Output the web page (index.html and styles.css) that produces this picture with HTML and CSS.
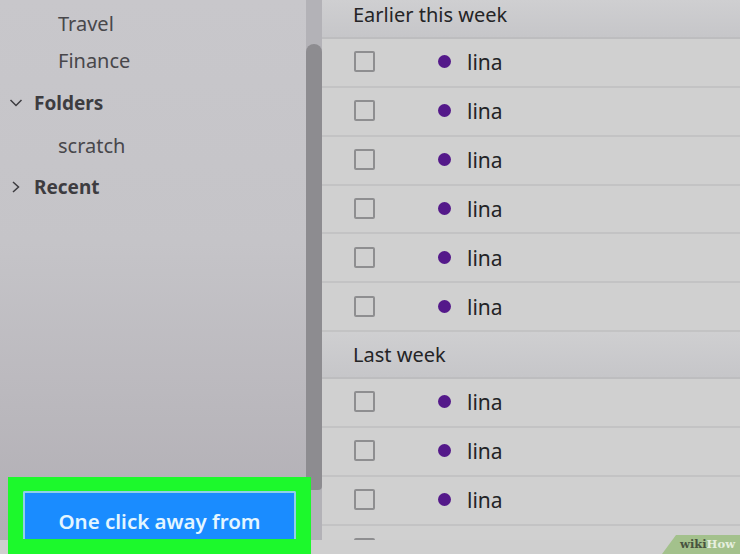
FILE: index.html
```html
<!DOCTYPE html>
<html lang="en">
<head>
<meta charset="utf-8">
<title>Mail</title>
<link rel="stylesheet" href="styles.css">
</head>
<body>
<div class="app">
  <div class="left">
    <aside class="sidebar">
      <nav class="nav">
        <div class="item sub first">Travel</div>
        <div class="item sub second">Finance</div>
        <div class="item head">
          <svg class="chev" width="14" height="10" viewBox="0 0 14 10"><path d="M1.5 2 L7 7.5 L12.5 2" fill="none" stroke="#3d3c40" stroke-width="1.5"/></svg>
          <span>Folders</span>
        </div>
        <div class="item sub">scratch</div>
        <div class="item head">
          <svg class="chev" width="14" height="12" viewBox="0 0 14 12"><path d="M4 1 L9.5 6 L4 11" fill="none" stroke="#3d3c40" stroke-width="1.5"/></svg>
          <span>Recent</span>
        </div>
      </nav>
      <div class="scrollbar"><div class="thumb"></div></div>
    </aside>
  </div>
  <main class="list">
    <div class="group first-group">Earlier this week</div>
    <div class="row"><span class="check"></span><span class="dot"></span><span class="name">lina</span></div>
    <div class="row"><span class="check"></span><span class="dot"></span><span class="name">lina</span></div>
    <div class="row"><span class="check"></span><span class="dot"></span><span class="name">lina</span></div>
    <div class="row"><span class="check"></span><span class="dot"></span><span class="name">lina</span></div>
    <div class="row"><span class="check"></span><span class="dot"></span><span class="name">lina</span></div>
    <div class="row"><span class="check"></span><span class="dot"></span><span class="name">lina</span></div>
    <div class="group">Last week</div>
    <div class="row"><span class="check"></span><span class="dot"></span><span class="name">lina</span></div>
    <div class="row"><span class="check"></span><span class="dot"></span><span class="name">lina</span></div>
    <div class="row"><span class="check"></span><span class="dot"></span><span class="name">lina</span></div>
    <div class="row"><span class="check"></span></div>
  </main>
</div>
<div class="strip"></div>
<div class="callout"><button class="cta" type="button">One click away from</button></div>
<div class="badge"><span class="wiki">wiki</span><span class="how">How</span></div>
</body>
</html>
```
FILE: styles.css
```css
html, body {
  margin: 0;
  padding: 0;
  width: 740px;
  height: 554px;
  overflow: hidden;
  font-family: "Noto Sans", "Open Sans", sans-serif;
}
.app {
  display: flex;
  height: 540px;
  overflow: hidden;
}
.strip {
  height: 14px;
  background: #cfcfcf;
}
.left {
  width: 322px;
  flex: none;
  display: flex;
  flex-direction: column;
}
.sidebar {
  height: 540px;
  display: flex;
  background: linear-gradient(#c8c7cb 0%, #c5c4c8 45%, #b1aeb4 100%);
}
.nav {
  width: 306px;
  flex: none;
}
.item {
  height: 42px;
  display: flex;
  align-items: center;
  font-size: 20px;
  color: #48474b;
}
.item.sub {
  padding-left: 58px;
}
.item.first {
  height: 26px;
  margin-top: 10px;
  margin-bottom: 11px;
}
.item.second {
  height: 26px;
  margin-bottom: 9px;
}
.item.head {
  font-weight: 700;
  font-size: 19px;
  color: #3d3c40;
  padding-left: 9px;
}
.chev {
  width: 14px;
  margin-right: 11px;
}
.scrollbar {
  width: 16px;
  flex: none;
  background: #b3b2b7;
  padding-top: 44px;
  box-sizing: border-box;
}
.thumb {
  height: 446px;
  background: #8d8c90;
  border-radius: 8px 8px 4px 4px;
}
.list {
  flex: 1;
  background: #d0d0d0;
  overflow: hidden;
}
.group {
  height: 47px;
  box-sizing: border-box;
  padding-left: 31px;
  display: flex;
  align-items: center;
  font-size: 20px;
  color: #242426;
  background: linear-gradient(#cfcfd1, #c6c6c9);
  border-bottom: 2px solid #bdbdbf;
}
.group.first-group {
  height: 39px;
  padding-bottom: 9px;
}
.row {
  height: 48.85px;
  box-sizing: border-box;
  display: flex;
  align-items: center;
  padding-left: 32px;
  background: #d0d0d0;
  border-bottom: 2px solid #c3c3c4;
}
.check {
  width: 21px;
  height: 21px;
  box-sizing: border-box;
  border: 2px solid #8e8e90;
  border-radius: 2px;
  flex: none;
  margin-bottom: 1px;
}
.dot {
  width: 13px;
  height: 13px;
  border-radius: 50%;
  background: #54198a;
  flex: none;
  margin-left: 63px;
  margin-bottom: 1px;
}
.name {
  margin-left: 16px;
  font-size: 21px;
  color: #242426;
}
.callout {
  position: absolute;
  left: 8px;
  top: 477px;
  width: 303px;
  height: 77px;
  background: #1cf92c;
  box-sizing: border-box;
  padding: 14px 0 0 15px;
}
.cta {
  display: block;
  width: 273px;
  height: 48px;
  box-sizing: border-box;
  border: 2px solid #8fd0e8;
  border-bottom: 0;
  border-radius: 2px 2px 0 0;
  background: #1a8cff;
  color: #e4f6ff;
  font-family: inherit;
  font-size: 20.5px;
  font-weight: 600;
  padding: 9px 0 0;
}
.badge {
  position: absolute;
  left: 662px;
  top: 535px;
  width: 78px;
  height: 19px;
  background: #a3c18c;
  clip-path: polygon(14px 0, 100% 0, 100% 100%, 0 100%);
  box-sizing: border-box;
  padding-left: 18px;
  font-family: "DejaVu Serif", "Liberation Serif", serif;
  font-weight: 700;
  font-size: 11.5px;
  line-height: 19px;
}
.wiki {
  color: #48533f;
}
.how {
  color: #e6efdf;
}
```
